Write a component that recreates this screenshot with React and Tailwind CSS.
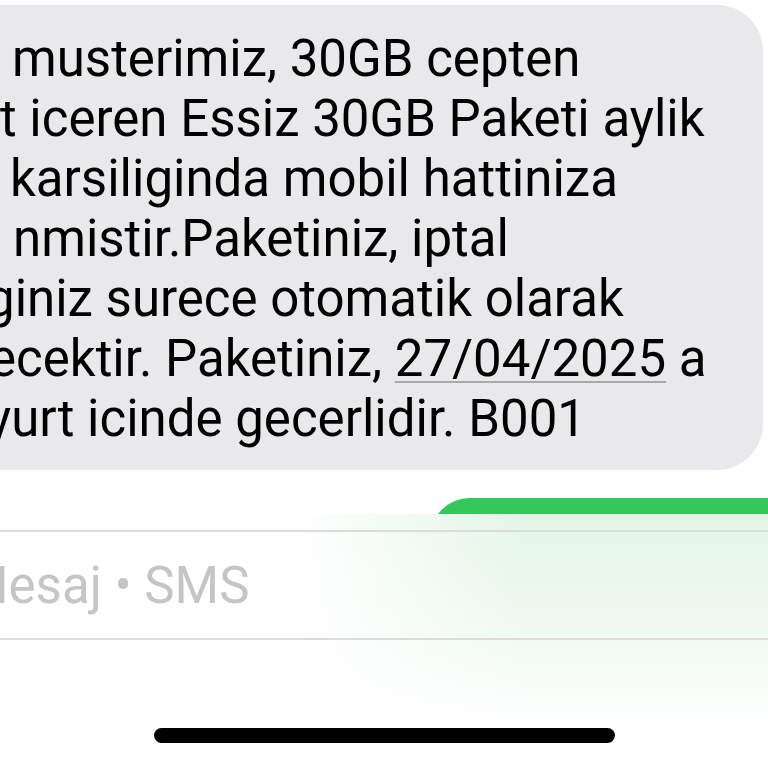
import React from 'react';

const lines = [
  { text: 'musterimiz, 30GB cepten', indent: 'ml-[12px]' },
  { text: 't iceren Essiz 30GB Paketi aylik', indent: 'ml-[0px]' },
  { text: 'karsiliginda mobil hattiniza', indent: 'ml-[10px]' },
  { text: 'nmistir.Paketiniz, iptal', indent: 'ml-[13px]' },
  { text: 'giniz surece otomatik olarak', indent: 'ml-[-14px]' },
  { text: null, indent: 'ml-[-11px]' },
  { text: 'yurt icinde gecerlidir. B001', indent: 'ml-[-13px]' },
];

const IncomingBubble = () => (
  <div className="mt-[5px] mr-[5px] rounded-r-[46px] bg-[#e9e9eb] pt-[24px] pb-[21px] overflow-hidden">
    {lines.map((line, i) => (
      <div key={i} className={`whitespace-nowrap text-[51px] leading-[60px] text-black ${line.indent}`}>
        {line.text ?? (
          <>
            ecektir. Paketiniz,{' '}
            <span className="underline decoration-[#a8a8a8] decoration-2 underline-offset-[5px]">27/04/2025</span> a
          </>
        )}
      </div>
    ))}
  </div>
);

const App = () => {
  return (
    <div className="w-[768px] h-[768px] overflow-hidden bg-white font-['Roboto',Arial,sans-serif]">
      <IncomingBubble />

      {/* outgoing bubble, mostly under the input bar */}
      <div className="mt-[28px] h-[16px] overflow-hidden">
        <div className="ml-[430px] h-[80px] rounded-tl-[40px] bg-[#34c759]" />
      </div>

      {/* input bar, frosted over the green bubble */}
      <div className="h-[254px] flex flex-col pt-[16px] bg-[linear-gradient(to_bottom,rgba(255,255,255,0)_0%,rgba(255,255,255,0.45)_45%,#ffffff_85%),linear-gradient(to_right,#ffffff_38%,#e3f5e7_68%,#e3f5e7_100%)]">
        <div className="h-[110px] border-y-2 border-[#dcdcdc] flex items-center">
          <span className="ml-[-36px] whitespace-nowrap text-[51px] leading-none text-[#c5c5c7]">
            Mesaj • SMS
          </span>
        </div>
        <div className="mt-[88px] mx-auto w-[461px] h-[15px] rounded-full bg-black" />
      </div>
    </div>
  );
};

export default App;
